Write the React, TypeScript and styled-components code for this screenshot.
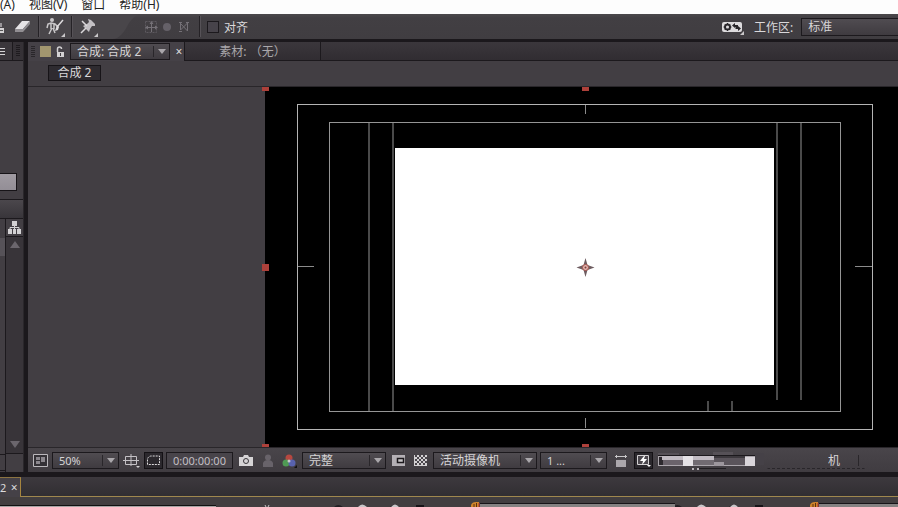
import React from "react";
import styled, { createGlobalStyle } from "styled-components";

const Global = createGlobalStyle`
  * { box-sizing: border-box; }
  body { margin: 0; background: #434044; overflow: hidden; }
  body, button, select, input {
    font-family: "Noto Sans", "Noto Sans CJK SC", sans-serif;
    font-size: 12px;
  }
  button, select { border-radius: 0; margin: 0; }
  svg { display: block; flex: none; }
`;

const App = styled.div`
  display: flex;
  flex-direction: column;
  height: 100vh;
  overflow: hidden;
  background: #1b181c;
  color: #cfcdcf;
`;

const MenuBar = styled.nav`
  display: flex;
  align-items: flex-end;
  gap: 14px;
  height: 14px;
  flex: none;
  overflow: hidden;
  background: #fdfdfd;
`;
const MenuItem = styled.button`
  border: 0;
  padding: 0;
  background: none;
  color: #222;
  line-height: 18px;
  white-space: nowrap;
`;

const Toolbar = styled.header`
  display: flex;
  align-items: center;
  height: 25px;
  flex: none;
  background: linear-gradient(#4b484b, #423f43 4px, #403d41);
  overflow: hidden;
`;
const ToolGroup = styled.div`
  display: flex;
  align-items: center;
  align-self: stretch;
  background: #49464a;
`;
const ToolButton = styled.button<{ $w: number }>`
  display: flex;
  align-items: center;
  justify-content: center;
  width: ${(p) => p.$w}px;
  height: 24px;
  flex: none;
  padding: 0;
  border: 0;
  background: none;
`;
const Separator = styled.span`
  width: 2px;
  height: 21px;
  flex: none;
  border-left: 1px solid #252226;
  border-right: 1px solid #565257;
`;
const CheckLabel = styled.label`
  display: flex;
  align-items: center;
  gap: 5px;
  padding-left: 6px;
  color: #dad8da;
`;
const Check = styled.input`
  appearance: none;
  width: 12px;
  height: 12px;
  margin: 0;
  border: 1px solid #1c191d;
  background: #47434a;
`;
const WorkspaceLabel = styled.label`
  display: flex;
  align-items: center;
  gap: 8px;
  width: 144px;
  flex: none;
  color: #dad8da;
  white-space: nowrap;
`;
const AxisModes = styled.div`
  display: flex;
  padding-right: 5px;
`;
const Spacer = styled.div`
  flex: 1;
`;

const SelectBox = styled.span<{ $w?: number; $h?: number; $flat?: boolean }>`
  display: grid;
  align-items: center;
  width: ${(p) => (p.$w ? p.$w + "px" : "100%")};
  height: ${(p) => p.$h ?? 17}px;
  flex: none;
  border: 1px solid ${(p) => (p.$flat ? "transparent" : "#1c191d")};
  ${(p) => p.$flat && "border-bottom: 1px dashed #29262a;"}
  background: ${(p) => (p.$flat ? "none" : "linear-gradient(#504c51, #3f3b40)")};
  overflow: hidden;
  & > * { grid-area: 1 / 1; }
`;
const Select = styled.select<{ $small?: boolean; $indent?: number }>`
  appearance: none;
  width: 100%;
  height: 100%;
  border: 0;
  padding: 0 18px 0 ${(p) => p.$indent ?? 6}px;
  background: none;
  color: #d6d4d6;
  font-size: ${(p) => (p.$small ? 11 : 12)}px;
  line-height: 14px;
`;
const ArrowCell = styled.span<{ $faint?: boolean }>`
  display: flex;
  align-items: center;
  justify-content: center;
  justify-self: end;
  width: ${(p) => (p.$faint ? 6 : 16)}px;
  height: 11px;
  border-left: 1px solid #29262a;
  pointer-events: none;
`;
const Arrow = () => (
  <svg width="8" height="5" viewBox="0 0 8 5"><path d="M0 0H8L4 5Z" fill="#aaa7ab" /></svg>
);

type DropProps = {
  label: string; value: string; w?: number; h?: number; indent?: number; small?: boolean;
};
const Drop = ({ label, value, w, h, indent, small }: DropProps) => (
  <SelectBox $w={w} $h={h}>
    <Select aria-label={label} $small={small} $indent={indent}>
      <option>{value}</option>
    </Select>
    <ArrowCell><Arrow /></ArrowCell>
  </SelectBox>
);

const Workspace = styled.main`
  display: grid;
  grid-template-columns: 24px minmax(0, 1fr);
  gap: 4px;
  flex: none;
  padding-top: 3px;
`;
const SidePanel = styled.aside`
  display: flex;
  flex-direction: column;
  min-width: 0;
  overflow: hidden;
  background: #423e43;
  border-right: 1px solid #2a272b;
`;
const SideTabs = styled.div`
  display: flex;
  align-items: center;
  gap: 3px;
  height: 19px;
  flex: none;
  background: #353136;
  border-bottom: 1px solid #1c191d;
`;
const SideTab = styled.button`
  display: flex;
  align-items: center;
  width: 13px;
  height: 18px;
  padding: 0;
  border: 0;
  border-right: 1px solid #1c191d;
  background: #3b373c;
`;
const SidePreview = styled.div`
  display: flex;
  align-items: flex-end;
  height: 139px;
  flex: none;
  padding-bottom: 8px;
  border-bottom: 1px solid #1c191d;
`;
const Thumb = styled.span`
  width: 17px;
  height: 18px;
  border: 1px solid #171418;
  border-left: 0;
  background: linear-gradient(#a09ba2, #938e96);
`;
const SideHeader = styled.div`
  height: 19px;
  flex: none;
  background: linear-gradient(#4b474c, #38353a);
  border-bottom: 1px solid #1c191d;
`;
const SideList = styled.div`
  display: grid;
  grid-template-columns: 6px 1fr;
  flex: 1;
`;
const ListEdge = styled.div`
  display: flex;
  flex-direction: column;
  padding-top: 19px;
  border-right: 1px solid #1c191d;
`;
const SelectedRow = styled.span`
  height: 18px;
  background: #565258;
`;
const ListFoot = styled.span`
  height: 17px;
  margin: auto 0 1px;
  border-top: 1px solid #1c191d;
  border-bottom: 1px solid #1c191d;
`;
const ScrollColumn = styled.div`
  display: flex;
  flex-direction: column;
  padding-bottom: 18px;
`;
const TreeButton = styled.button`
  display: flex;
  align-items: center;
  justify-content: center;
  height: 18px;
  padding: 0;
  border: 0;
  border-bottom: 1px solid #1c191d;
  background: #423e43;
`;
const Scrollbar = styled.div`
  display: flex;
  flex-direction: column;
  justify-content: space-between;
  align-items: center;
  flex: 1;
  padding: 4px 0 5px;
  background: #383439;
  border-bottom: 1px solid #1c191d;
`;

const CompPanel = styled.section`
  display: flex;
  flex-direction: column;
  min-width: 0;
  background: #423e43;
`;
const TabStrip = styled.div`
  display: flex;
  height: 19px;
  flex: none;
  background: linear-gradient(#3b373c, #302c31);
  box-shadow: inset 0 -1px #1c191d;
`;
const ActiveTab = styled.div`
  display: flex;
  align-items: center;
  gap: 5px;
  width: 157px;
  flex: none;
  padding-left: 3px;
  background: #454147;
  border-right: 1px solid #1c191d;
`;
const Swatch = styled.span`
  width: 11px;
  height: 11px;
  flex: none;
  background: #a2966f;
`;
const CloseButton = styled.button`
  width: 8px;
  border: 0;
  padding: 0;
  background: none;
  color: #dddbdd;
  line-height: 14px;
`;
const InactiveTab = styled.button`
  width: 136px;
  border: 0;
  border-right: 1px solid #1c191d;
  padding: 0;
  background: none;
  color: #aaa7ab;
  line-height: 18px;
`;
const Breadcrumbs = styled.div`
  display: flex;
  align-items: center;
  height: 26px;
  flex: none;
  padding: 0 20px 2px;
  border-bottom: 1px solid #29262a;
`;
const Crumb = styled.button`
  width: 53px;
  height: 16px;
  padding: 0;
  border: 1px solid #171418;
  background: #2e2b30;
  color: #dad8da;
  line-height: 14px;
`;
const Viewer = styled.div`
  padding-left: 237px;
  overflow: hidden;
`;
const Stage = styled.div`
  min-width: 0;
  background: #000;
  & > svg { overflow: visible; }
`;
const Footer = styled.footer`
  display: flex;
  align-items: center;
  gap: 3px;
  height: 25px;
  flex: none;
  padding: 1px 0 0 3px;
  border-top: 1px solid #29262a;
  background: linear-gradient(#49454a, #403c41);
  overflow: hidden;
`;
const FootButton = styled.button<{ $w: number; $pressed?: boolean }>`
  display: flex;
  align-items: center;
  justify-content: center;
  width: ${(p) => p.$w}px;
  height: 17px;
  flex: none;
  padding: 0;
  border: ${(p) => (p.$pressed ? "1px solid #141115" : "0")};
  background: ${(p) => (p.$pressed ? "#2b282d" : "none")};
`;
const Timecode = styled.button`
  width: 67px;
  height: 17px;
  flex: none;
  padding: 0;
  border: 1px solid #1c191d;
  background: #48444a;
  color: #c2bfc3;
  font-size: 11px;
  line-height: 14px;
`;

const Timeline = styled.section`
  display: flex;
  flex-direction: column;
  flex: 1;
  min-height: 30px;
  margin-top: 5px;
`;
const TimelineTabs = styled.div`
  display: flex;
  height: 20px;
  flex: none;
`;
const TimelineTab = styled.div`
  display: flex;
  align-items: center;
  gap: 4px;
  width: 21px;
  flex: none;
  border-top: 1px solid #8c7442;
  border-right: 1px solid #a6853f;
  background: #454147;
  color: #dddbdd;
  font-size: 11px;
`;
const TimelineRest = styled.div`
  flex: 1;
  border-bottom: 1px solid #a0884e;
  background: linear-gradient(#3d393e, #312e32);
`;
const TimelineBody = styled.div`
  display: flex;
  align-items: flex-end;
  flex: 1;
  overflow: hidden;
  background: #423e40;
`;
const SearchEdge = styled.span`
  width: 216px;
  height: 2px;
  flex: none;
  background: #a7a5a5;
  border-top: 1px solid #111;
`;
const RulerBar = styled.span<{ $w?: number }>`
  height: 4px;
  ${(p) => (p.$w ? `width: ${p.$w}px; flex: none;` : "flex: 1;")}
  border-top: 1px solid #171418;
  background: #858282;
`;

const Corner = () => <path d="M20 17v4h-4z" fill="#c9c7c9" />;

const Grip = ({ color }: { color: string }) => (
  <svg width="4" height="12" viewBox="0 0 4 12">
    {[0, 2, 4, 6, 8, 10].map((y) => <path key={y} d={`M0 ${y + 0.5}h4`} stroke={color} />)}
  </svg>
);

const Marker = () => (
  <svg width="9" height="5" viewBox="0 0 9 5">
    <path d="M0 5V3Q1 0 5 0H8V5Z" fill="#d0842b" />
    <path d="M3 5V2M5.500 5V1" stroke="#5a3010" />
    <path d="M8 1V5" stroke="#b8302c" />
  </svg>
);

const HeaderGlyphs = ({ w }: { w: number }) => (
  <svg width={w} height="3" viewBox={`${-w} 0 ${w} 3`}>
    <path d="M-137 3q4-4 9 0zM-81 3q4-4 9 0z" fill="#211e22" />
    <path d="M-113 3q4-5 9 0zM-80 3q4-5 8 0z" fill="#c9c7c9" />
    <path d="M-55 2h8" stroke="#161317" strokeWidth="2" />
    <path d="M-206 1l1 2M-202 1l-1 2" stroke="#c9c7c9" />
  </svg>
);

const Handle = ({ x, y }: { x: number; y: number }) => (
  <rect x={x - 3} y={y - 3} width="7" height="7" fill="#ad403a" />
);

const Composition = () => (
  <svg width="640" height="360" viewBox="0 0 640 360" role="img" aria-label="合成 2">
    <rect width="640" height="360" fill="#000" />
    <rect x="130" y="61" width="379" height="237" fill="#fff" />
    <g fill="none" strokeWidth="1">
      <rect x="32.500" y="17.500" width="575" height="325" stroke="#b4b4b4" />
      <rect x="64.500" y="35.500" width="511" height="289" stroke="#959595" />
      <path d="M104 36V324M128 36V324M512 36V313M536 36V313M443 314V324M467 314V324" stroke="#4a4a4a" strokeWidth="2" />
      <path d="M320.500 18V27M320.500 331V341M33 179.500H49M590 179.500H607" stroke="#8b8b8b" />
    </g>
    <path d="M320.500 171l2 7 7 2.500-7 2.500-2 7-2-7-7-2.500 7-2.500z" fill="#6d5c60" />
    <circle cx="320.500" cy="180.500" r="3" fill="#e0b3ae" stroke="#a5504a" />
    <circle cx="320.500" cy="180.500" r="1" fill="#7c3d3a" />
    <Handle x={0} y={0} />
    <Handle x={320} y={0} />
    <Handle x={0} y={180} />
    <Handle x={0} y={360} />
    <Handle x={320} y={360} />
  </svg>
);

const Mosaic = () => (
  <svg width="108" height="19" viewBox="0 0 108 19">
    <path d="M2 2h21v3h34v-4h20v4h-10v2H2z" fill="#565157" />
    <rect x="2" y="5" width="97" height="10" fill="#2d292e" />
    <rect x="2.500" y="5.500" width="96" height="9" fill="none" stroke="#aaa5ab" />
    <path d="M2 4h97v1H2z" fill="#1c191d" />
    <rect x="6" y="5" width="52" height="4" fill="#c1bbc2" />
    <rect x="7" y="9" width="20" height="5" fill="#6a636b" />
    <rect x="27" y="5" width="10" height="10" fill="#e5e2e6" />
    <rect x="37" y="9" width="21" height="5" fill="#716b72" />
    <rect x="58" y="5" width="31" height="2" fill="#3c383d" />
    <rect x="58" y="7" width="31" height="7" fill="#5a545b" />
    <rect x="58" y="11" width="10" height="4" fill="#9c969d" />
    <rect x="89" y="6" width="10" height="9" fill="#d9d5da" />
    <rect x="99" y="2" width="9" height="12" fill="#454147" />
    <path d="M42 17.500h28" stroke="#201d21" />
    <path d="M36 18h2M41 18h2" stroke="#b8b4b9" strokeWidth="2" />
  </svg>
);

export default function EffectsWorkspace() {
  return (
    <App>
      <Global />
      <MenuBar>
        <MenuItem>(A)</MenuItem>
        <MenuItem>视图(V)</MenuItem>
        <MenuItem>窗口</MenuItem>
        <MenuItem>帮助(H)</MenuItem>
      </MenuBar>

      <Toolbar>
        <ToolGroup>
          <ToolButton $w={8} aria-label="图章工具">
            <svg width="8" height="20" viewBox="0 0 8 20"><path d="M0 11h4v5H0z" fill="#d4d2d4" /><path d="M0 13.500h3" stroke="#555" /><path d="M0 6h2v4H0z" fill="#99969a" /></svg>
          </ToolButton>
          <ToolButton $w={30} aria-label="橡皮擦工具">
            <svg width="20" height="20" viewBox="0 0 20 20"><path d="M2 12L9 4h8l-7 8z" fill="#e6e4e6" /><path d="M2 12h8v3H2zM10 12l7-8v3l-7 8z" fill="#918e92" /></svg>
          </ToolButton>
          <Separator />
          <ToolButton $w={31} aria-label="Roto 笔刷工具">
            <svg width="21" height="22" viewBox="0 0 21 22">
              <circle cx="7" cy="4" r="2" fill="#c9c7c9" />
              <path d="M2 12l1-4 3-1 4 1 3 3M6 7v6M9 8v5M7 12l-3 6M8 12l2 5" stroke="#c9c7c9" strokeWidth="1.500" fill="none" />
              <path d="M18 4l-6 7" stroke="#dedcde" strokeWidth="1.500" /><path d="M12 9l2 2-1 3-3 1z" fill="#dedcde" />
              <Corner />
            </svg>
          </ToolButton>
          <Separator />
          <ToolButton $w={31} aria-label="木偶工具">
            <svg width="21" height="22" viewBox="0 0 21 22">
              <path d="M10 3l3 1 4 4 0 2-3 0-2 3-1 3-3-3-3-3 4-2 2-2z" fill="#c3c0c4" />
              <path d="M8 12l-5 5M4 5l5 5" stroke="#dad8da" strokeWidth="1.500" /><Corner />
            </svg>
          </ToolButton>
        </ToolGroup>
        <svg width="38" height="25" viewBox="0 0 38 25"><path d="M0 0H38Q30 1 25 9Q17 25 9 25H0Z" fill="#49464a" /></svg>
        <AxisModes>
          <ToolButton $w={18} disabled aria-label="本地轴模式">
            <svg width="14" height="14" viewBox="0 0 14 14" fill="none" stroke="#5d595f"><path d="M1.500 1.500h11v11h-11z" strokeDasharray="2 1" /><path d="M7.500 3v9M3 7.500h9" stroke="#757177" /><path d="M7.500 1l2 3h-4zM14 7.500l-3 2v-4zM1 7.500l3 2v-4z" fill="#757177" stroke="none" /></svg>
          </ToolButton>
          <ToolButton $w={14} disabled aria-label="世界轴模式">
            <svg width="10" height="10" viewBox="0 0 10 10"><circle cx="5" cy="5" r="4" fill="#656168" /></svg>
          </ToolButton>
          <ToolButton $w={20} disabled aria-label="视图轴模式">
            <svg width="12" height="12" viewBox="0 0 12 12" fill="none" stroke="#757177"><path d="M2.500 1V9L9.500 2M3 3L9.500 10M9.500 1v9M1 1.500h3M8 1.500h3M1 10.500h3" /></svg>
          </ToolButton>
        </AxisModes>
        <Separator />
        <CheckLabel><Check type="checkbox" />对齐</CheckLabel>
        <Spacer />
        <ToolButton $w={42} aria-label="同步设置">
          <svg width="23" height="18" viewBox="0 0 23 18">
            <rect x="0" y="4" width="20" height="10" rx="2" fill="#dddbdd" />
            <circle cx="5.500" cy="9" r="2.500" fill="none" stroke="#29262a" strokeWidth="2" />
            <path d="M5.500 5v8M1.500 9h8M3 6.500l5 5M8 6.500l-5 5" stroke="#29262a" /><circle cx="5.500" cy="9" r="1.500" fill="#dddbdd" />
            <path d="M10 7.500L13 5v2h3v3h-1.500V9H13v1zM19 10.500L16 13v-2h-2.500V8.500H15v1h1V8z" fill="#29262a" /><path d="M22 13v4h-4z" fill="#c9c7c9" />
          </svg>
        </ToolButton>
        <WorkspaceLabel>工作区:
          <SelectBox $h={18}><Select aria-label="工作区"><option>标准</option></Select></SelectBox>
        </WorkspaceLabel>
      </Toolbar>

      <Workspace>
        <SidePanel>
          <SideTabs>
            <SideTab aria-label="面板菜单"><svg width="6" height="9" viewBox="0 0 6 9"><path d="M0 1.500h5M0 4.500h5M0 7.500h5" stroke="#d6d4d6" /></svg></SideTab>
            <Grip color="#1e1b1f" />
          </SideTabs>
          <SidePreview><Thumb /></SidePreview>
          <SideHeader />
          <SideList>
            <ListEdge><SelectedRow /><ListFoot /></ListEdge>
            <ScrollColumn>
              <TreeButton aria-label="流程图">
                <svg width="13" height="13" viewBox="0 0 13 13"><path d="M4 0h5v5H4zM0 8h4v5H0zM5 8h3v5H5zM9 8h4v5H9z" fill="#d3d1d3" /><path d="M6.500 5v3M2 8V6.500h9V8" fill="none" stroke="#d3d1d3" /></svg>
              </TreeButton>
              <Scrollbar>
                <svg width="10" height="7" viewBox="0 0 10 7"><path d="M0 7L5 0l5 7z" fill="#6b666d" /></svg>
                <svg width="10" height="7" viewBox="0 0 10 7"><path d="M0 0h10L5 7z" fill="#6b666d" /></svg>
              </Scrollbar>
            </ScrollColumn>
          </SideList>
        </SidePanel>

        <CompPanel>
          <TabStrip>
            <ActiveTab>
              <Grip color="#29262a" />
              <Swatch />
              <svg width="9" height="12" viewBox="0 0 9 12"><path d="M1.500 6V3q0-2 2-2t2 2" fill="none" stroke="#d3d1d3" strokeWidth="1.500" /><path d="M1 6h7v5H1z" fill="#d3d1d3" /><path d="M4 7h1v3H4z" fill="#423e43" /></svg>
              <Drop label="合成" value="合成: 合成 2" w={100} />
              <CloseButton aria-label="关闭">×</CloseButton>
            </ActiveTab>
            <InactiveTab>素材: （无）</InactiveTab>
          </TabStrip>
          <Breadcrumbs><Crumb>合成 2</Crumb></Breadcrumbs>
          <Viewer><Stage><Composition /></Stage></Viewer>
          <Footer>
            <FootButton $w={18} aria-label="始终预览此视图">
              <svg width="15" height="13" viewBox="0 0 15 13"><path d="M.5.500h14v12H.5z" fill="#343136" stroke="#bbb8bc" /><path d="M3 3h4v3H3zM3 7h4v3H3zM8 3h4v5H8z" fill="#8b878d" /></svg>
            </FootButton>
            <Drop label="放大率" value="50%" w={67} small />
            <FootButton $w={19} aria-label="网格和参考线选项">
              <svg width="17" height="15" viewBox="0 0 17 15"><path d="M2.500 3.500h11v8h-11zM8 1v12M0 7.500h16" fill="none" stroke="#c4c1c5" /><path d="M13 13h4l-2 2z" fill="#d3d1d3" /></svg>
            </FootButton>
            <FootButton $w={19} $pressed aria-label="蒙版可见性">
              <svg width="15" height="11" viewBox="0 0 15 11"><path d="M1.500 9.500V4q1-3 4-3h8v8.500z" fill="none" stroke="#dddbdd" strokeDasharray="2 1" /></svg>
            </FootButton>
            <Timecode>0:00:00:00</Timecode>
            <FootButton $w={20} aria-label="拍摄快照">
              <svg width="14" height="11" viewBox="0 0 14 11"><path d="M0 2h4l1-2h4l1 2h4v9H0z" fill="#d6d4d6" /><circle cx="7" cy="6" r="2.500" fill="#d6d4d6" stroke="#39353a" /></svg>
            </FootButton>
            <FootButton $w={18} disabled aria-label="显示快照">
              <svg width="12" height="13" viewBox="0 0 12 13"><circle cx="6" cy="3.500" r="3" fill="#68636a" /><path d="M1 13V9q1-3 5-3t5 3v4z" fill="#68636a" /></svg>
            </FootButton>
            <FootButton $w={19} aria-label="显示通道">
              <svg width="15" height="14" viewBox="0 0 15 14"><circle cx="7" cy="4" r="3.500" fill="#b64840" /><circle cx="4" cy="9" r="3.500" fill="#4f9a54" /><circle cx="10" cy="9" r="3.500" fill="#5862ae" /><circle cx="7" cy="7" r="1.500" fill="#c9c7c9" /><path d="M15 11v3h-3z" fill="#111" /></svg>
            </FootButton>
            <Drop label="分辨率" value="完整" w={84} />
            <FootButton $w={19} aria-label="目标区域">
              <svg width="13" height="11" viewBox="0 0 13 11"><path d="M0 0h13v11H0z" fill="#b4b0b5" /><path d="M5.500 3.500h6v4h-6z" fill="#c9c7c9" stroke="#1c191d" strokeWidth="1.500" /></svg>
            </FootButton>
            <FootButton $w={19} aria-label="切换透明网格">
              <svg width="13" height="11" viewBox="0 0 13 11"><path d="M0 0h13v11H0z" fill="#d3d1d3" />
                {[1, 3, 5, 7, 9].map((y, r) => [1, 5, 9].map((x) => <rect key={`${x}-${y}`} x={x + (r % 2) * 2} y={y - 1} width="2" height="2" fill="#4b474d" />))}
              </svg>
            </FootButton>
            <Drop label="3D 视图" value="活动摄像机" w={104} />
            <Drop label="视图布局" value="1 ..." w={67} small />
            <FootButton $w={21} aria-label="像素长宽比校正">
              <svg width="12" height="13" viewBox="0 0 12 13"><path d="M1 5h10v8H1z" fill="#aba7ac" /><path d="M0 2.500h12M1.500 1v3M10.500 1v3" stroke="#c9c7c9" /><path d="M1 5.500h10" stroke="#4a464b" /></svg>
            </FootButton>
            <FootButton $w={19} $pressed aria-label="快速预览">
              <svg width="15" height="13" viewBox="0 0 15 13"><path d="M1.500 1.500h11v9h-11z" fill="#4b474d" stroke="#d3d1d3" /><path d="M8 2L4 7h3l-1 4 5-6H8l1-3z" fill="#fff" /><path d="M11 11h4l-2 2z" fill="#fff" /></svg>
            </FootButton>
            <Mosaic />
            <SelectBox $w={98} $flat>
              <Select aria-label="渲染器" $indent={60}><option>机</option></Select>
              <ArrowCell $faint />
            </SelectBox>
          </Footer>
        </CompPanel>
      </Workspace>

      <Timeline>
        <TimelineTabs>
          <TimelineTab>2<CloseButton aria-label="关闭时间轴">×</CloseButton></TimelineTab>
          <TimelineRest />
        </TimelineTabs>
        <TimelineBody>
          <SearchEdge />
          <HeaderGlyphs w={255} />
          <Marker />
          <RulerBar $w={195} />
          <HeaderGlyphs w={135} />
          <Marker />
          <RulerBar />
        </TimelineBody>
      </Timeline>
    </App>
  );
}
